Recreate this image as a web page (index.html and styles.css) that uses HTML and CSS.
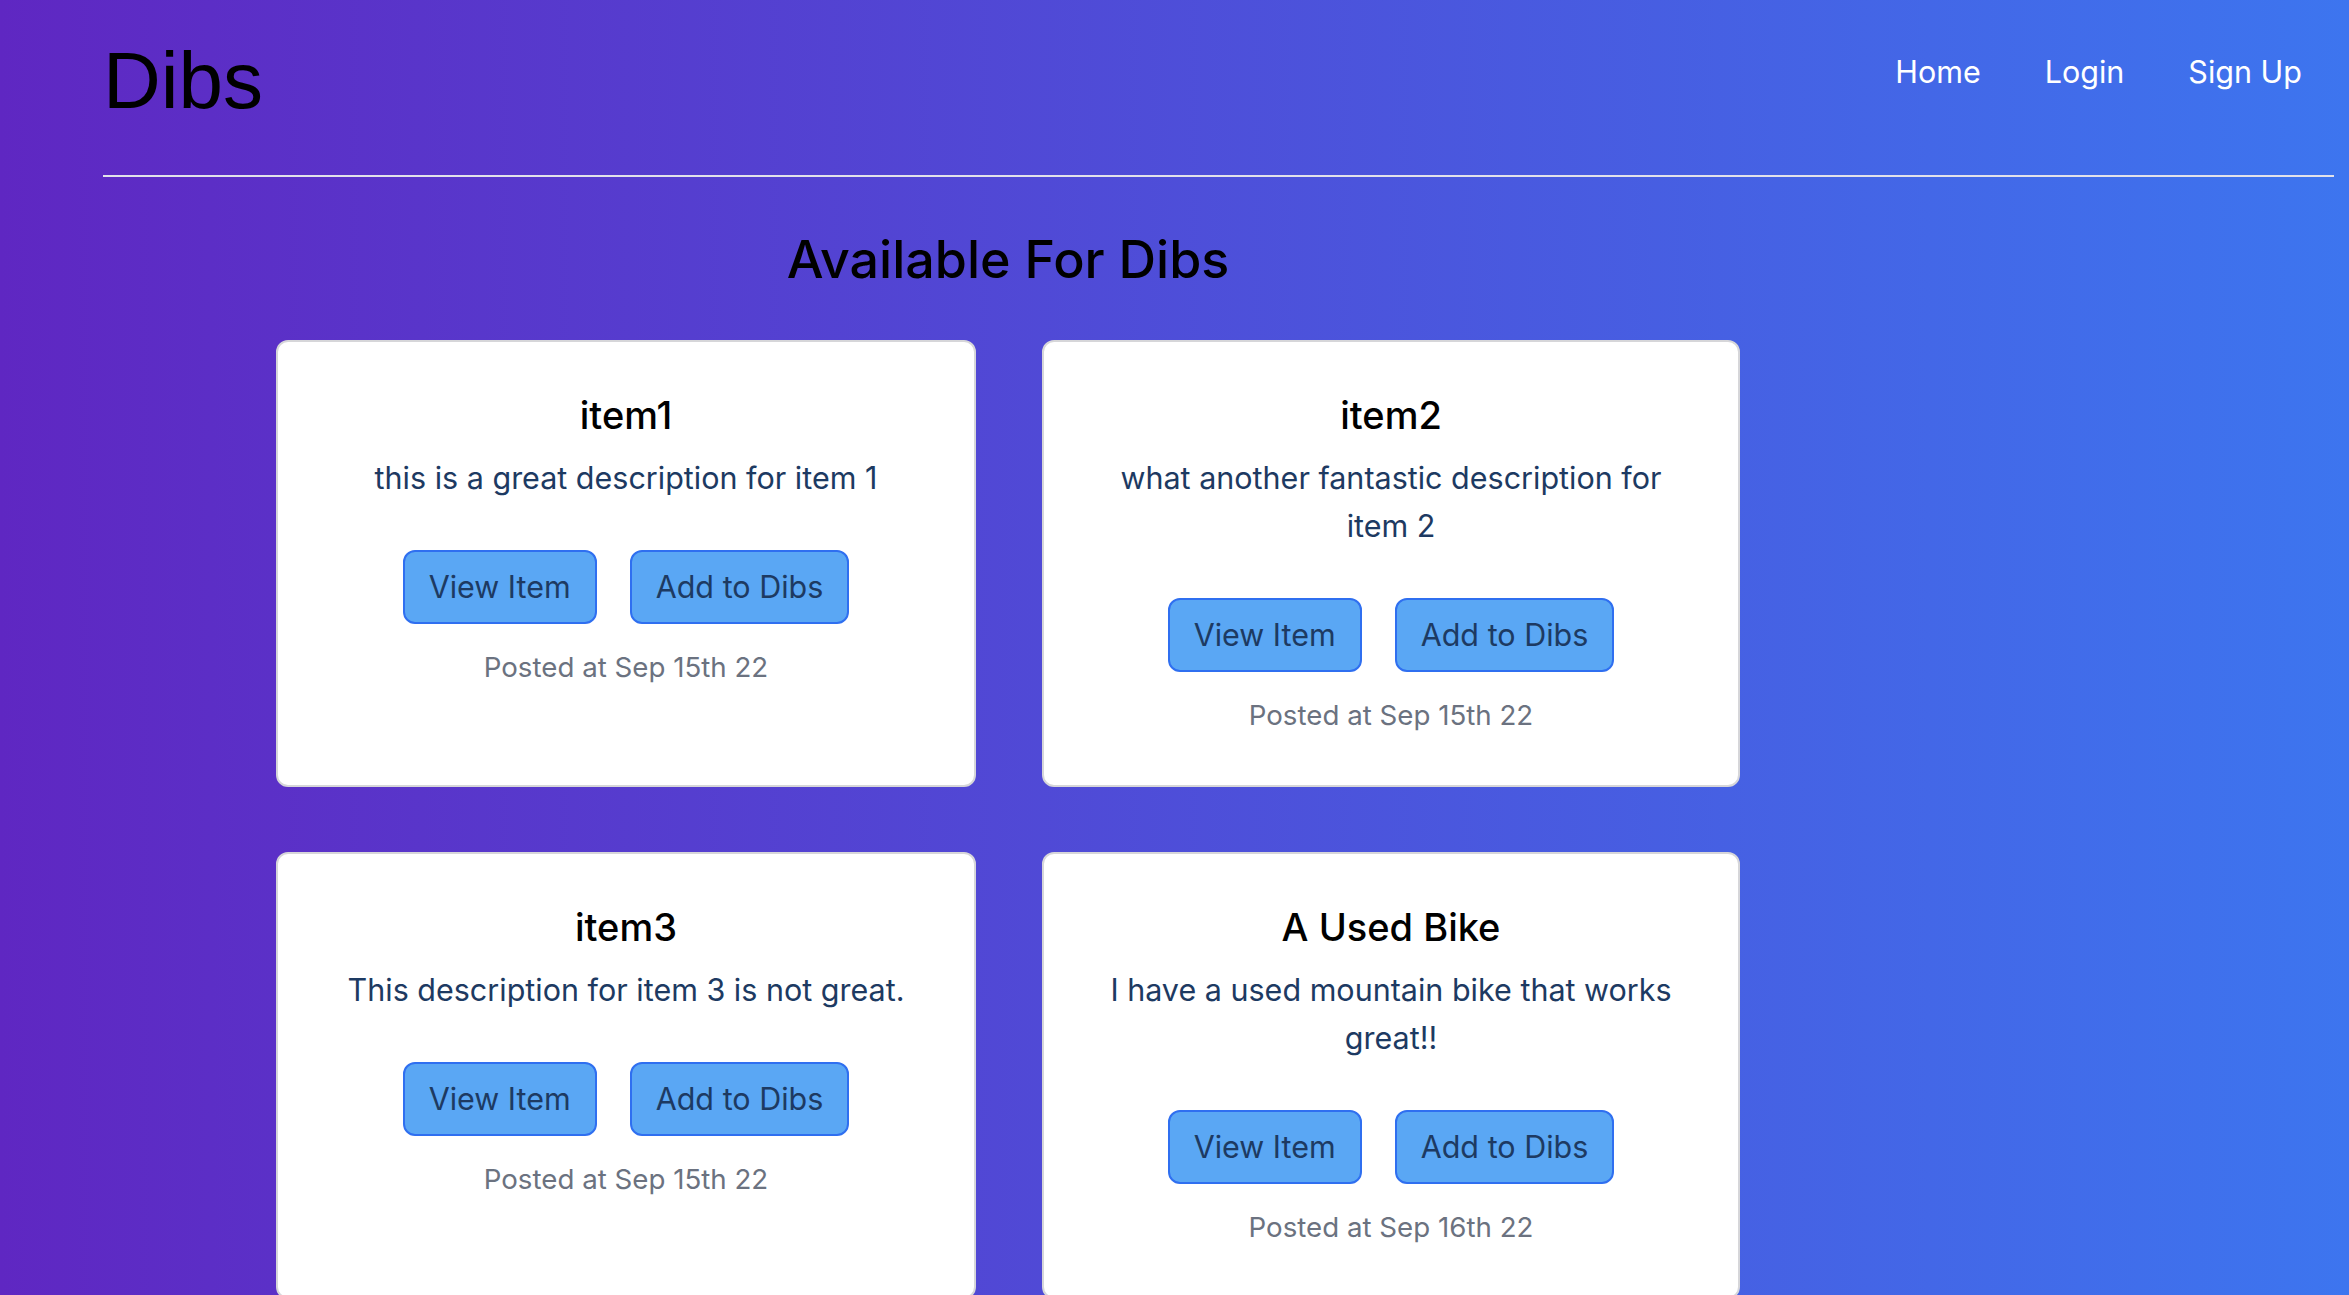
FILE: index.html
```html
<!DOCTYPE html>
<html lang="en">
<head>
<meta charset="utf-8">
<title>Dibs</title>
<link rel="stylesheet" href="styles.css">
</head>
<body>
<header class="site-header">
  <a class="logo" href="#">Dibs</a>
  <nav class="nav">
    <a class="nav-link" href="#">Home</a>
    <a class="nav-link" href="#">Login</a>
    <a class="nav-link" href="#">Sign Up</a>
  </nav>
</header>
<main class="main">
  <h1 class="page-title">Available For Dibs</h1>
  <section class="grid">
    <article class="card">
      <h2 class="card-title">item1</h2>
      <p class="card-desc">this is a great description for item 1</p>
      <div class="card-actions">
        <button class="btn">View Item</button>
        <button class="btn">Add to Dibs</button>
      </div>
      <p class="card-date">Posted at Sep 15th 22</p>
    </article>
    <article class="card">
      <h2 class="card-title">item2</h2>
      <p class="card-desc">what another fantastic description for item 2</p>
      <div class="card-actions">
        <button class="btn">View Item</button>
        <button class="btn">Add to Dibs</button>
      </div>
      <p class="card-date">Posted at Sep 15th 22</p>
    </article>
    <article class="card">
      <h2 class="card-title">item3</h2>
      <p class="card-desc">This description for item 3 is not great.</p>
      <div class="card-actions">
        <button class="btn">View Item</button>
        <button class="btn">Add to Dibs</button>
      </div>
      <p class="card-date">Posted at Sep 15th 22</p>
    </article>
    <article class="card">
      <h2 class="card-title">A Used Bike</h2>
      <p class="card-desc">I have a used mountain bike that works great!!</p>
      <div class="card-actions">
        <button class="btn">View Item</button>
        <button class="btn">Add to Dibs</button>
      </div>
      <p class="card-date">Posted at Sep 16th 22</p>
    </article>
  </section>
</main>
</body>
</html>
```

FILE: styles.css
```css
html {
  background: linear-gradient(to right, #5f27c2, #3d75ef);
  min-height: 100%;
}

body {
  margin: 0;
  min-height: 100vh;
  background: linear-gradient(to right, #5f27c2, #3d75ef);
  font-family: Inter, "Noto Sans", sans-serif;
  color: #000;
}

.site-header {
  display: flex;
  justify-content: space-between;
  align-items: flex-start;
  height: 175px;
  margin: 0 15px 0 103px;
  border-bottom: 2px solid #e2e2ea;
}

.logo {
  margin-top: 41px;
  margin-left: 0;
  font-family: "Liberation Sans", Arial, sans-serif;
  font-size: 80px;
  line-height: 80px;
  color: #000;
  text-decoration: none;
}

.nav {
  display: flex;
  margin-top: 49px;
}

.nav-link {
  padding: 0 32px;
  font-size: 30.5px;
  line-height: 46px;
  color: #fff;
  text-decoration: none;
}

.main {
  width: 2016px;
  display: flex;
  flex-direction: column;
  align-items: center;
}

.page-title {
  margin: 51px 0 48px;
  font-size: 52px;
  font-weight: 500;
  line-height: 64px;
  color: #000;
}

.grid {
  display: grid;
  grid-template-columns: 700px 698px;
  column-gap: 66px;
  row-gap: 65px;
}

.card {
  display: flex;
  flex-direction: column;
  align-items: center;
  background: #fff;
  border: 2px solid #d6d6d9;
  border-radius: 12px;
  padding: 50px 56px 48px;
  height: 447px;
  box-sizing: border-box;
  text-align: center;
}

.card-title {
  margin: 0;
  font-size: 38px;
  font-weight: 500;
  line-height: 46px;
  color: #000;
}

.card-desc {
  margin: 16px 0 0;
  font-size: 30.5px;
  line-height: 48px;
  color: #1d3a62;
}

.card-actions {
  display: flex;
  gap: 33px;
  margin-top: 48px;
}

.btn {
  font-family: Inter, "Noto Sans", sans-serif;
  font-size: 30.5px;
  line-height: 48px;
  padding: 11px 24px;
  border: 2px solid #2f6ff0;
  border-radius: 12px;
  background: #5aa7f4;
  color: #1d3a62;
  cursor: pointer;
}

.card-date {
  margin: 22px 0 0;
  font-size: 27.7px;
  line-height: 42px;
  color: #6b7280;
}
```
